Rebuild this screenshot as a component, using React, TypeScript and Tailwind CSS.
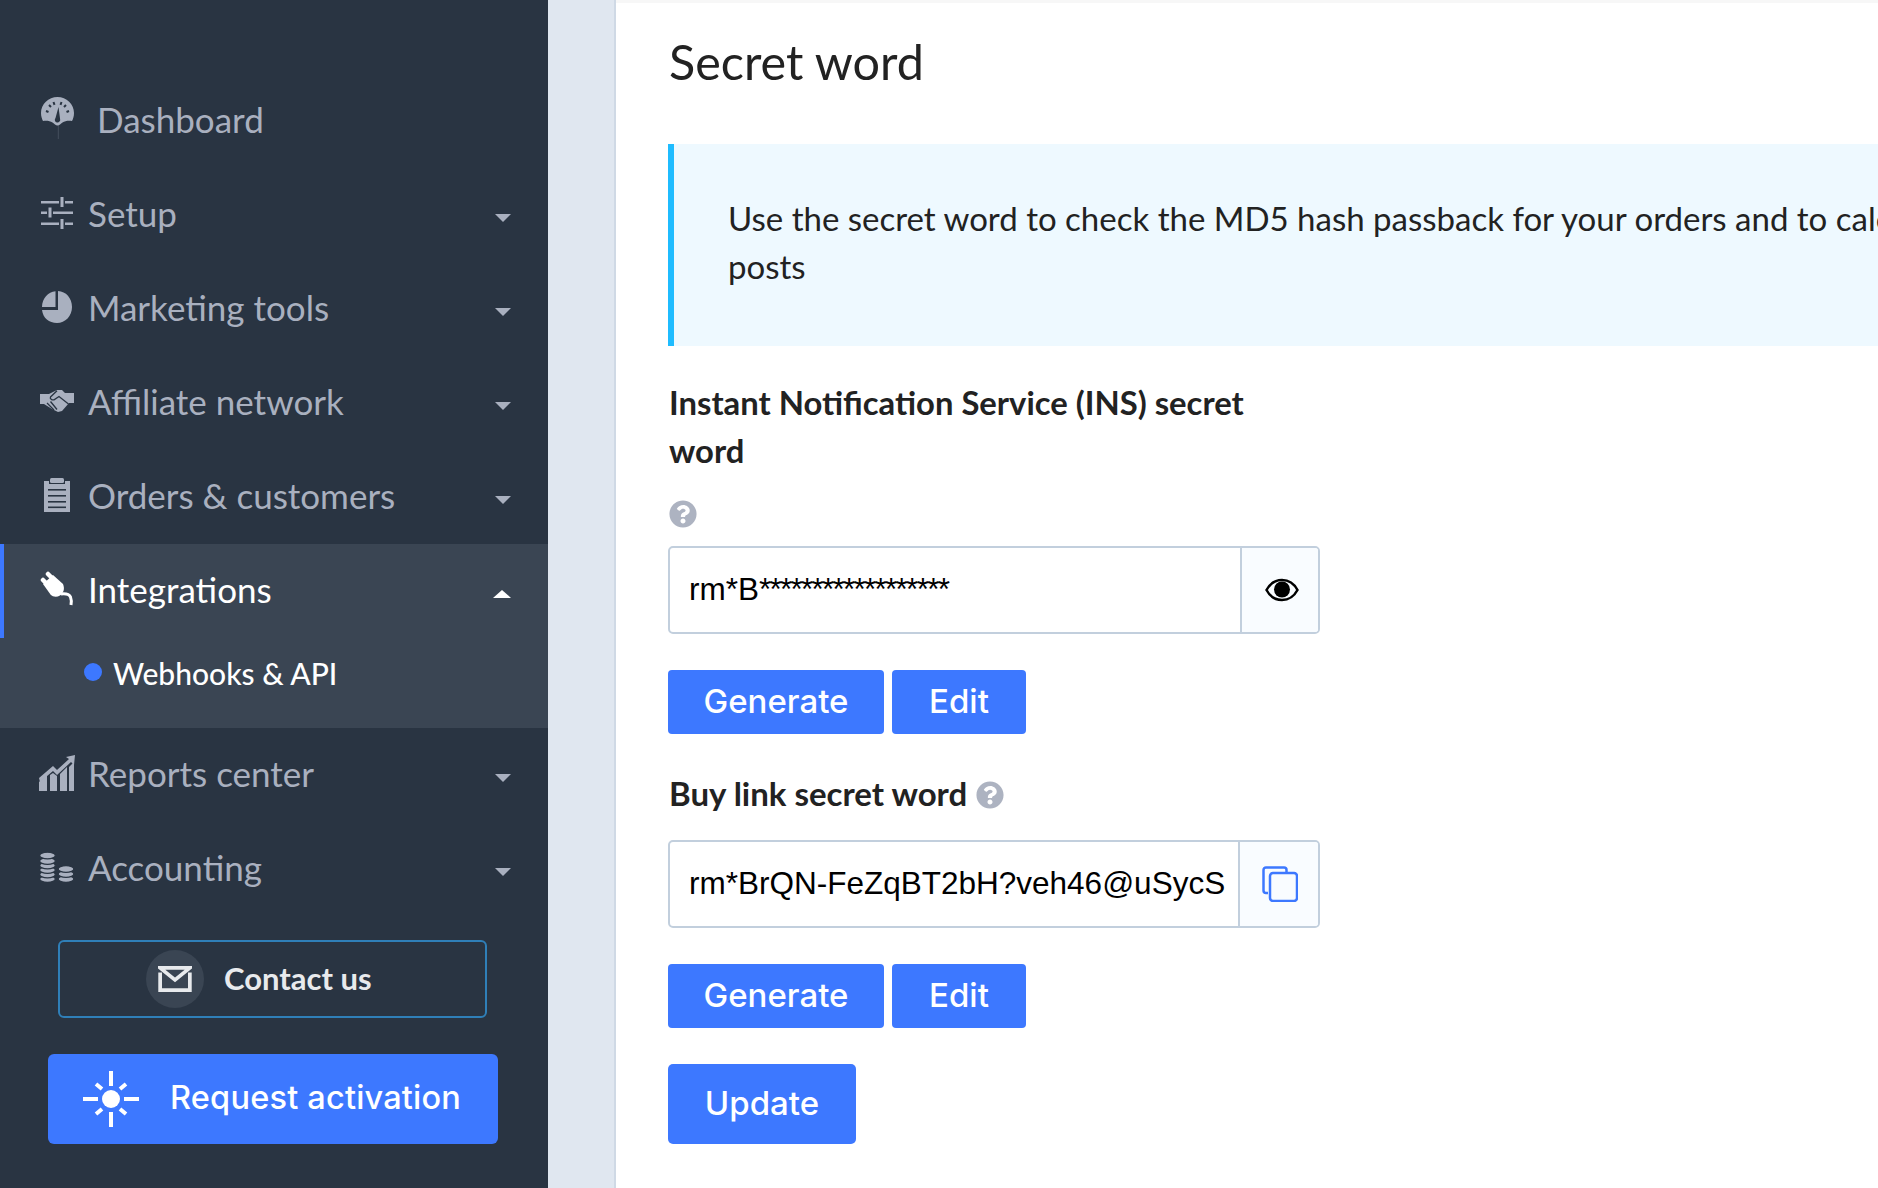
import type { ReactNode } from "react";
import { FaQuestionCircle } from "react-icons/fa";

const BODY_FONT = "font-['Lato','Open_Sans',sans-serif]";

function GaugeIcon() {
  return (
    <svg viewBox="0 0 33 44" className="w-[33px] h-[44px]" fill="currentColor">
      <path d="M16.500 0C7.500 0 0 7 0 16c0 3.500 1 6 2 8 4-.5 7 0 9.500 1.500 2 1.300 3 3 5 3s3-1.700 5-3C24 24 27 23.500 31 24c1-2 2-4.500 2-8C33 7 25.500 0 16.500 0z" />
      <g stroke="#293442" strokeWidth="2" fill="none">
        <path d="M5 14l2.500 1M8 8l2 2M12.500 5l1 2.800M20.500 5l-1 2.800M25 8l-2 2M28 14l-2.500 1" />
      </g>
      <path d="M17.500 10l-3 11a2.700 2.700 0 1 0 4.600 1z" fill="#293442" />
      <path d="M17.300 28v14" stroke="currentColor" strokeWidth="0.700" opacity="0.3" />
    </svg>
  );
}

function SlidersIcon() {
  return (
    <svg viewBox="0 0 32 32" className="w-[32px] h-[32px]" fill="currentColor">
      <rect x="0" y="4" width="32" height="2.500" />
      <rect x="0" y="14.500" width="32" height="2.500" />
      <rect x="0" y="25.500" width="32" height="2.500" />
      <rect x="18" y="0" width="6" height="10" fill="#293442" />
      <rect x="19.500" y="0" width="3" height="10" />
      <rect x="6" y="10.500" width="6" height="10" fill="#293442" />
      <rect x="7.500" y="10.500" width="3" height="10" />
      <rect x="18" y="22" width="6" height="10" fill="#293442" />
      <rect x="19.500" y="22" width="3" height="10" />
    </svg>
  );
}

function PieIcon() {
  return (
    <svg viewBox="0 0 30 32" className="w-[30px] h-[32px]" fill="currentColor">
      <path d="M13.500 0.200V16H0C0 7.500 6 1 13.500 .2z" />
      <path d="M16 0c8 .3 14 7.200 14 16 0 9-6.700 16-15 16C7 32 1 27 0 19h16z" />
    </svg>
  );
}

function HandshakeIcon() {
  return (
    <svg viewBox="0 0 34 22" className="w-[34px] h-[22px]" fill="currentColor">
      <path d="M0 4h9l8-4h5l3 3h9v10h-5l-7 8-4 1-6-3-8-5H0z" />
      <g stroke="#293442" strokeWidth="1.300" fill="none">
        <path d="M17 .8L10.500 7c-1 1.500 1.500 3.500 3.500 2.800l5-3.300 9.500 7.500" />
        <path d="M7 13l7 7M10.500 11.500l6.500 8" />
      </g>
    </svg>
  );
}

function ClipboardIcon() {
  return (
    <svg viewBox="0 0 26 34" className="w-[26px] h-[34px]" fill="currentColor">
      <path d="M0 3h5v3h16V3h5v31H0z" />
      <rect x="6" y="0" width="14" height="5" rx="1.500" />
      <g fill="#293442">
        <rect x="4" y="11" width="18" height="1.600" />
        <rect x="4" y="17" width="18" height="1.600" />
        <rect x="4" y="23" width="18" height="1.600" />
        <rect x="4" y="28.500" width="18" height="1.600" />
      </g>
    </svg>
  );
}

function PlugIcon() {
  return (
    <svg viewBox="0 0 34 36" className="w-[34px] h-[36px]" fill="currentColor">
      <path d="M8 3l5 5M3 9l5 5" stroke="currentColor" strokeWidth="4.500" strokeLinecap="round" fill="none" />
      <path d="M3 13L13 4l10 9c2 5 .5 9-3 11.500-3.500 2-7 1.500-9.500-1z" />
      <path d="M21 23c4-.5 8 0 9.500 3 1 2.500 1 5 .5 8" stroke="currentColor" strokeWidth="3" fill="none" />
    </svg>
  );
}

function ChartIcon() {
  return (
    <svg viewBox="0 0 36 36" className="w-[36px] h-[36px]" fill="currentColor">
      <path d="M0 36v-9l8-7v16z" />
      <path d="M11 36V20l3-2 4 3v15z" />
      <path d="M21 36V19l7-7v24z" />
      <path d="M30 36V12l5-5v29z" />
      <path d="M0 23l14-12 4 4L30 4l-3-2 9-2-1 10-3-3L18 20l-4-4L1 27z" />
    </svg>
  );
}

function CoinsIcon() {
  const tall = [27, 22.500, 18, 13.500, 9, 3.500];
  const short = [27, 22, 17];
  return (
    <svg viewBox="0 0 34 30" className="w-[34px] h-[30px]" fill="currentColor" stroke="#293442" strokeWidth="1.200">
      {tall.map((y) => (
        <ellipse key={y} cx="7.500" cy={y} rx="7.800" ry="3.300" />
      ))}
      {short.map((y) => (
        <ellipse key={y} cx="26" cy={y} rx="7.800" ry="3.300" />
      ))}
    </svg>
  );
}

function CaretDown() {
  return <div className="w-0 h-0 border-x-[8.500px] border-x-transparent border-t-[8px] border-t-[#a9b0bf]" />;
}

function CaretUp() {
  return <div className="w-0 h-0 border-x-[9px] border-x-transparent border-b-[8px] border-b-white" />;
}

function NavItem({ icon, label, textGap = "mr-[13px]" }: { icon: ReactNode; label: string; textGap?: string }) {
  return (
    <div className="h-[94px] flex items-center pl-[39px] pr-[37px] text-[#a9b0bf]">
      <div className={`w-[36px] h-[40px] mb-[4px] flex items-center justify-center shrink-0 ${textGap}`}>{icon}</div>
      <span className={`text-[35px] mb-[4px] ${BODY_FONT}`}>{label}</span>
      {label !== "Dashboard" && (
        <div className="ml-auto mt-[6px]">
          <CaretDown />
        </div>
      )}
    </div>
  );
}

function Sidebar() {
  return (
    <aside className="w-[548px] h-full shrink-0 bg-[#293442] pt-[74px]">
      <NavItem icon={<GaugeIcon />} label="Dashboard" textGap="mr-[22px]" />
      <NavItem icon={<SlidersIcon />} label="Setup" />
      <NavItem icon={<PieIcon />} label="Marketing tools" />
      <NavItem icon={<HandshakeIcon />} label="Affiliate network" />
      <NavItem icon={<ClipboardIcon />} label="Orders & customers" />

      <div className="bg-[#3a4553] h-[184px]">
        <div className="h-[94px] flex items-center pl-[35px] pr-[37px] border-l-4 border-[#3d78ff] text-white">
          <div className="w-[36px] h-[40px] mb-[4px] mr-[13px] flex items-center justify-center shrink-0">
            <PlugIcon />
          </div>
          <span className={`text-[35px] mb-[4px] ${BODY_FONT}`}>Integrations</span>
          <div className="ml-auto mt-[5px]">
            <CaretUp />
          </div>
        </div>
        <div className="h-[70px] flex items-center pl-[84px] text-white">
          <span className="w-[18px] h-[18px] rounded-full bg-[#3d78ff] mr-[11px] mb-[2px]" />
          <span className={`text-[30px] font-medium ${BODY_FONT}`}>Webhooks &amp; API</span>
        </div>
      </div>

      <NavItem icon={<ChartIcon />} label="Reports center" />
      <NavItem icon={<CoinsIcon />} label="Accounting" />

      <button className="ml-[58px] mt-[24px] w-[429px] h-[78px] rounded-[6px] border-2 border-[#2f7fb8] flex items-center pl-[86px]">
        <span className="w-[58px] h-[58px] rounded-full bg-[#3a4553] flex items-center justify-center text-[#e8eaed] mr-[20px]">
          <svg viewBox="0 0 36 28" className="w-[34px] h-[26px]" fill="none" stroke="currentColor" strokeWidth="4">
            <path d="M2 7V26h32V7" />
            <path d="M2 2h32L18 15z" />
          </svg>
        </span>
        <span className={`text-[31px] mb-[2px] font-bold text-[#e8eaed] ${BODY_FONT}`}>Contact us</span>
      </button>

      <button className="ml-[48px] mt-[36px] w-[450px] h-[90px] rounded-[6px] bg-[#3d78ff] flex items-center pl-[35px] text-white">
        <svg viewBox="0 0 56 56" className="w-[56px] h-[56px] mr-[31px]" stroke="currentColor" strokeWidth="4" fill="none">
          <circle cx="28" cy="28" r="9" fill="currentColor" stroke="none" />
          <path d="M28 0v15M28 41v15M0 28h15M41 28h15M13 13l6 5M43 13l-6 5M13 43l6-5M43 43l-6-5" />
        </svg>
        <span className="text-[32.500px] mb-[2px] font-medium font-['Inter',sans-serif] tracking-[0.2px]">Request activation</span>
      </button>
    </aside>
  );
}

function HelpIcon({ className = "" }: { className?: string }) {
  return <FaQuestionCircle className={`w-[28px] h-[28px] text-[#adb3c1] ${className}`} />;
}

function SecretInput({ value, divider, children }: { value: ReactNode; divider: string; children: ReactNode }) {
  return (
    <div className="w-[652px] h-[88px] flex rounded-[5px] border-2 border-[#c2cfdd] overflow-hidden">
      <div className={`${divider} flex items-center pl-[19px] text-[31.500px] text-black font-['Liberation_Sans',sans-serif] whitespace-nowrap overflow-hidden`}>
        {value}
      </div>
      <div className="flex-1 bg-[#f9fcff] border-l-2 border-[#c2cfdd] flex items-center justify-center">{children}</div>
    </div>
  );
}

function ActionButtons({ className = "" }: { className?: string }) {
  const base = "h-[64px] rounded-[4px] bg-[#3d78ff] text-white text-[33px] font-medium font-['Inter',sans-serif]";
  return (
    <div className={`flex gap-[8px] ${className}`}>
      <button className={`${base} w-[216px]`}>Generate</button>
      <button className={`${base} w-[134px]`}>Edit</button>
    </div>
  );
}

function MainContent() {
  return (
    <main className="flex-1 h-full min-w-0 bg-white border-t-[3px] border-[#f7f7f7] overflow-hidden pl-[52px]">
      <h1 className={`text-[48.500px] leading-[56px] mt-[30px] ml-[1px] text-[#222] ${BODY_FONT}`}>Secret word</h1>

      <div className={`mt-[55px] h-[202px] border-l-[6px] border-[#1fbcff] bg-[#eef9ff] pl-[54px] pt-[50px] text-[33px] leading-[48px] text-[#222] whitespace-nowrap overflow-hidden ${BODY_FONT}`}>
        Use the secret word to check the MD5 hash passback for your orders and to calculate the hash of the
        <br />
        posts
      </div>

      <label className={`block w-[620px] ml-[1px] mt-[33px] text-[32.800px] leading-[48px] font-bold text-[#222] ${BODY_FONT}`}>
        Instant Notification Service (INS) secret word
      </label>
      <HelpIcon className="mt-[25px] mb-[18px] ml-[1px]" />

      <SecretInput
        value={
          <>
            rm*B<span className="tracking-[-1.750px]">******************</span>
          </>
        }
        divider="w-[570px]"
      >
        <svg viewBox="0 0 34 24" className="w-[34px] h-[24px] ml-[3px]">
          <path d="M1.500 12C5 5.500 10.500 2 17 2s12 3.500 15.500 10C29 18.500 23.500 22 17 22S5 18.500 1.500 12z" fill="none" stroke="#000" strokeWidth="2.500" />
          <circle cx="17" cy="11.500" r="8" fill="#000" />
        </svg>
      </SecretInput>

      <ActionButtons className="mt-[36px]" />

      <div className={`flex items-center ml-[1px] mt-[35px] text-[33px] leading-[48px] font-bold text-[#222] ${BODY_FONT}`}>
        Buy link secret word
        <HelpIcon className="ml-[9px] mt-[3px]" />
      </div>

      <div className="mt-[23px]">
        <SecretInput value="rm*BrQN-FeZqBT2bH?veh46@uSycS" divider="w-[568px]">
          <svg viewBox="0 0 36 36" className="w-[36px] h-[36px] ml-[2px]" fill="none" stroke="#3d78ff" strokeWidth="2.500">
            <path d="M6 27H4a2.500 2.500 0 0 1-2.500-2.500V4A2.500 2.500 0 0 1 4 1.500h18A2.500 2.500 0 0 1 24.500 4v2" />
            <rect x="8" y="7" width="27" height="28" rx="3" />
          </svg>
        </SecretInput>
      </div>

      <ActionButtons className="mt-[36px]" />

      <button className="mt-[36px] w-[188px] h-[80px] rounded-[5px] bg-[#3d78ff] text-white text-[33px] font-medium font-['Inter',sans-serif]">
        Update
      </button>
    </main>
  );
}

export default function App() {
  return (
    <div className="flex w-screen h-screen overflow-hidden bg-[#e0e7f0]">
      <Sidebar />
      <div className="w-[68px] h-full shrink-0 bg-[#e0e7f0] border-r-2 border-[#cfd9e5]" />
      <MainContent />
    </div>
  );
}
